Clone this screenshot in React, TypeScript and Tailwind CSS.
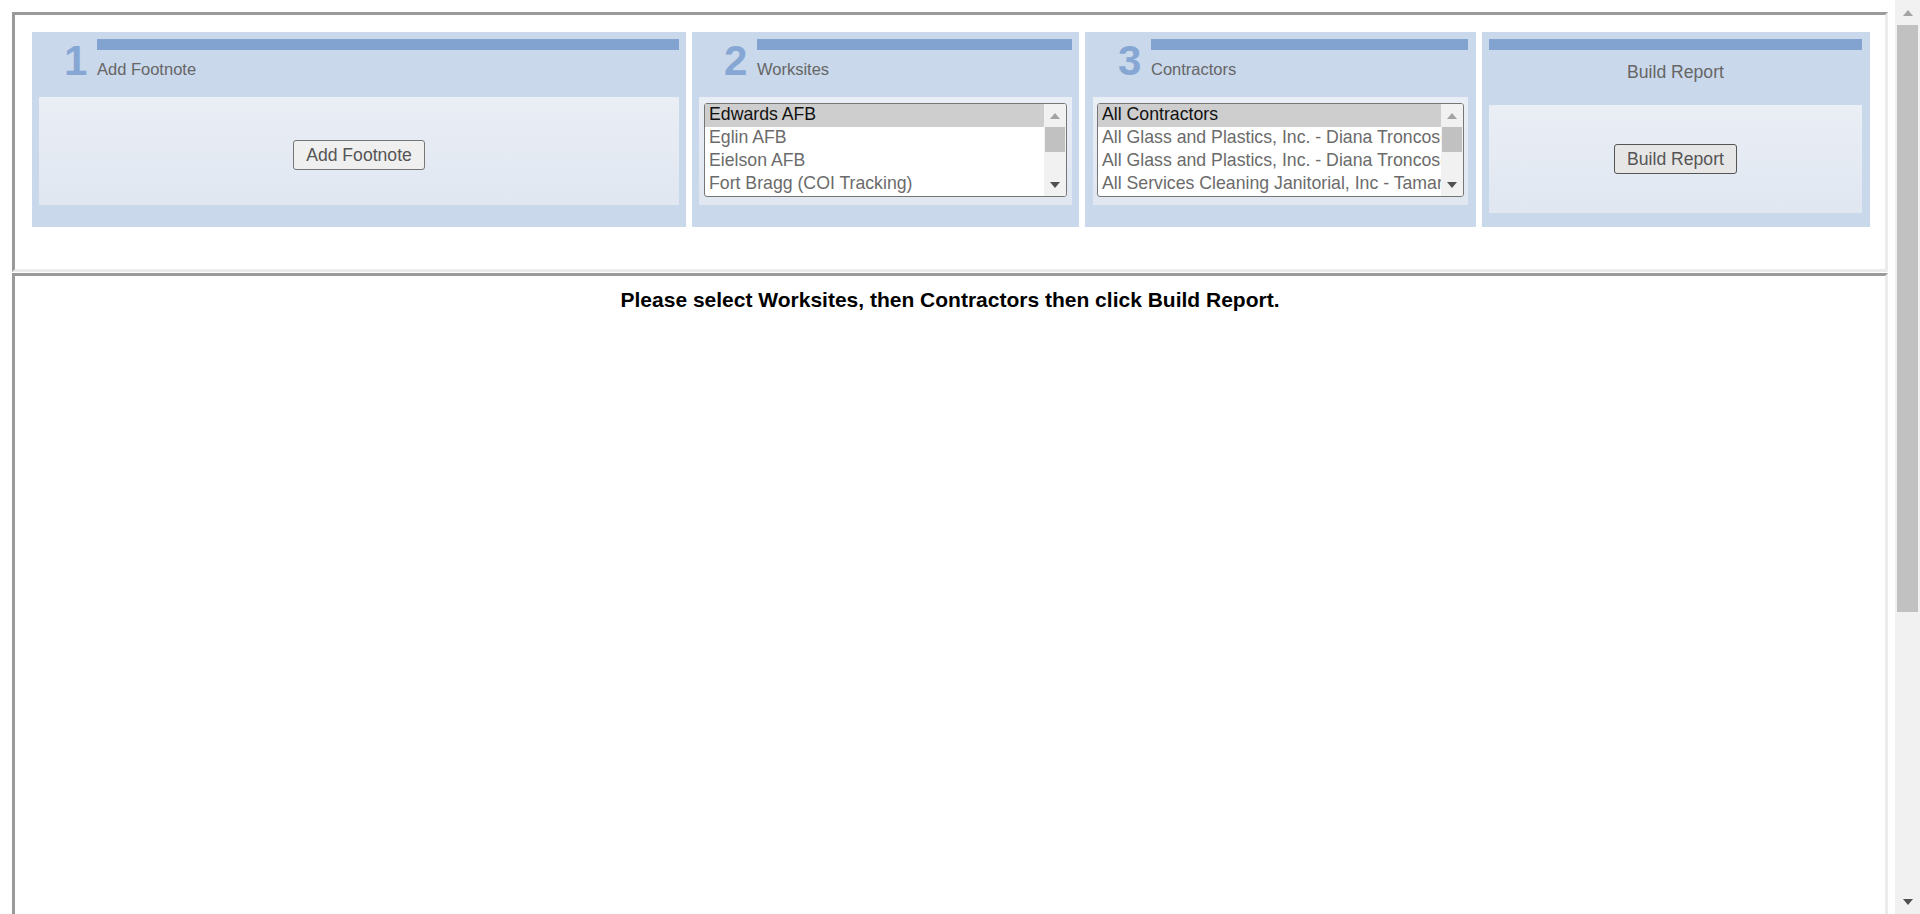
import React from "react";

const worksites = ["Edwards AFB", "Eglin AFB", "Eielson AFB", "Fort Bragg (COI Tracking)", "Fort Hood"];

const contractors = [
  "All Contractors",
  "All Glass and Plastics, Inc. - Diana Troncoso",
  "All Glass and Plastics, Inc. - Diana Troncoso",
  "All Services Cleaning Janitorial, Inc - Tamara Jones",
  "Allied Construction Services",
];

function Arrow({ up, color }: { up?: boolean; color: string }) {
  return (
    <svg width="10" height="6" viewBox="0 0 10 6">
      <path d={up ? "M0 6 L5 0 L10 6 Z" : "M0 0 L5 6 L10 0 Z"} fill={color} />
    </svg>
  );
}

function ListBox({ items }: { items: string[] }) {
  return (
    <div className="flex h-[94px] border border-[#767676] rounded-[3px] bg-white overflow-hidden">
      <div className="flex-1 min-w-0 overflow-hidden">
        {items.map((item, i) => (
          <div
            key={i}
            className={`h-[23px] leading-[20px] pl-[4px] whitespace-nowrap text-[17.7px] ${
              i === 0 ? "bg-[#cecece] text-[#111]" : "text-[#6b6b6b]"
            }`}
          >
            {item}
          </div>
        ))}
      </div>
      {/* scrollbar del listbox */}
      <div className="w-[22px] flex flex-col bg-[#f1f1f1]">
        <div className="h-[23px] flex items-center justify-center">
          <Arrow up color="#a3a3a3" />
        </div>
        <div className="h-[25px] mx-[1px] bg-[#c1c1c1]" />
        <div className="flex-1" />
        <div className="h-[23px] flex items-center justify-center">
          <Arrow color="#505050" />
        </div>
      </div>
    </div>
  );
}

function StepHeader({ num, title }: { num: string; title: string }) {
  return (
    <div className="flex h-[58px]">
      <div className="w-[58px] pl-[25px] pt-[1px] text-[42px] leading-[42px] font-bold text-[#86a7d3]">
        {num}
      </div>
      <div className="flex-1">
        <div className="h-[11px] bg-[#82a3d0]" />
        <div className="mt-[10px] text-[16.5px] leading-[18px] text-[#666]">{title}</div>
      </div>
    </div>
  );
}

export default function App() {
  return (
    <div
      className="flex w-[1920px] h-[914px] overflow-hidden bg-white"
      style={{ fontFamily: '"Liberation Sans", Arial, sans-serif' }}
    >
      <div className="w-[1895px] pl-[12px] pt-[12px] pr-[7px]">
        {/* marco superior */}
        <div className="h-[260px] border-[3px] border-t-[#9a9a9a] border-l-[#9a9a9a] border-r-[#ebebeb] border-b-[#ebebeb] pl-[17px] pt-[17px]">
          <div className="flex gap-[6px]">
            {/* 1 */}
            <div className="w-[654px] h-[195px] bg-[#c9d8eb] px-[7px] pt-[7px]">
              <StepHeader num="1" title="Add Footnote" />
              <div className="h-[108px] pt-[7px] flex items-center justify-center bg-gradient-to-b from-[#eaeef5] to-[#e0e7f1]">
                <button className="h-[30px] px-[12px] border border-[#767676] rounded-[3px] bg-[#efefef] text-[17.6px] leading-[20px] text-[#555]">
                  Add Footnote
                </button>
              </div>
            </div>

            {/* 2 */}
            <div className="w-[387px] h-[195px] bg-[#c9d8eb] px-[7px] pt-[7px]">
              <StepHeader num="2" title="Worksites" />
              <div className="h-[108px] px-[5px] pt-[6px] bg-gradient-to-b from-[#eaeef5] to-[#e0e7f1]">
                <ListBox items={worksites} />
              </div>
            </div>

            {/* 3 */}
            <div className="w-[391px] h-[195px] bg-[#c9d8eb] px-[8px] pt-[7px]">
              <StepHeader num="3" title="Contractors" />
              <div className="h-[108px] px-[4px] pt-[6px] bg-gradient-to-b from-[#eaeef5] to-[#e0e7f1]">
                <ListBox items={contractors} />
              </div>
            </div>

            {/* Build Report */}
            <div className="w-[388px] h-[195px] bg-[#c9d8eb] pl-[7px] pr-[8px] pt-[7px]">
              <div className="h-[11px] bg-[#82a3d0]" />
              <div className="mt-[12px] text-center text-[17.6px] leading-[20px] text-[#666]">Build Report</div>
              <div className="mt-[23px] h-[108px] flex items-center justify-center bg-gradient-to-b from-[#eaeef5] to-[#e0e7f1]">
                <button className="h-[30px] px-[12px] border border-[#555] rounded-[3px] bg-[#e6e6e6] text-[17.6px] leading-[20px] text-[#555]">
                  Build Report
                </button>
              </div>
            </div>
          </div>
        </div>

        {/* marco inferior */}
        <div className="mt-[1px] h-[700px] border-[3px] border-t-[#9a9a9a] border-l-[#9a9a9a] border-r-[#ebebeb] border-b-[#ebebeb] pt-[12px]">
          <p className="text-center font-bold text-[21px] leading-[24px] text-black">
            Please select Worksites, then Contractors then click Build Report.
          </p>
        </div>
      </div>

      {/* scrollbar de la página */}
      <div className="w-[25px] flex flex-col bg-[#f1f1f1]">
        <div className="h-[25px] flex items-center justify-center">
          <Arrow up color="#a3a3a3" />
        </div>
        <div className="h-[587px] mx-[2px] bg-[#c1c1c1]" />
        <div className="flex-1" />
        <div className="h-[25px] flex items-center justify-center">
          <Arrow color="#505050" />
        </div>
      </div>
    </div>
  );
}
